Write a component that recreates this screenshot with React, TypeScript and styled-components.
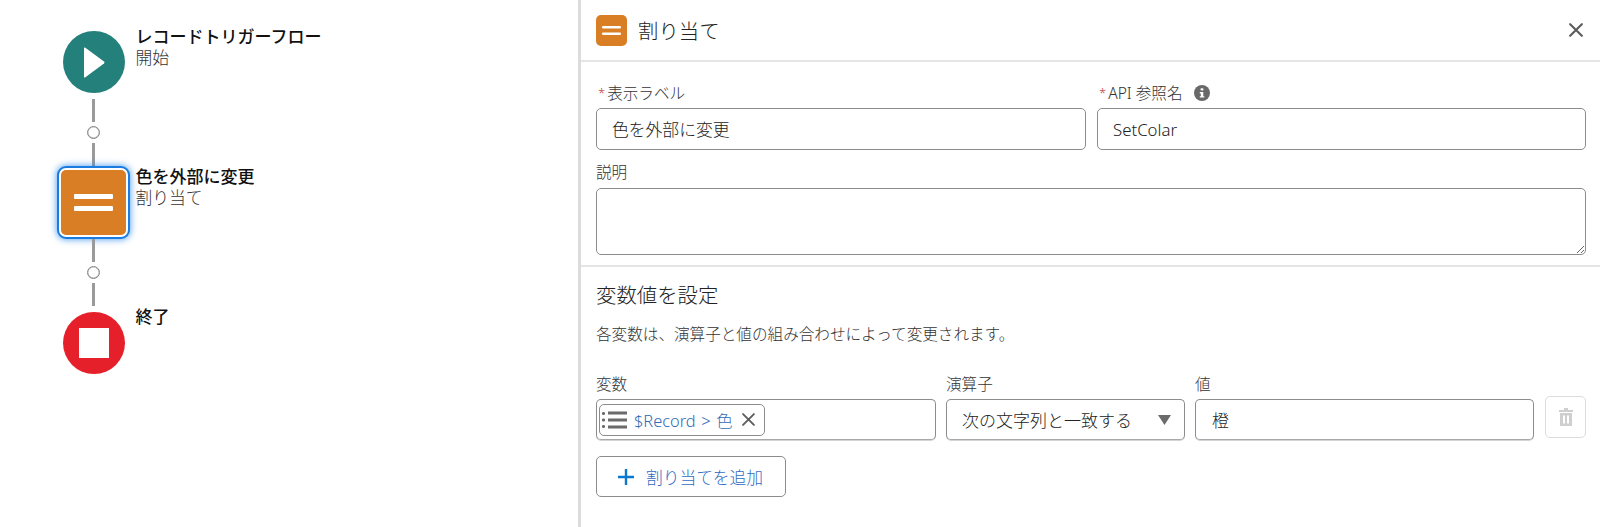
import React from "react";
import styled, { createGlobalStyle } from "styled-components";

const FONT = `"Noto Sans", "Noto Sans CJK JP", sans-serif`;

const Global = createGlobalStyle`
  html, body { margin: 0; padding: 0; background: #fff; }
  * { box-sizing: border-box; }
  body { font-family: ${FONT}; color: #2f2f2e; font-weight: 300; }
`;

const Page = styled.div`
  display: flex;
  width: 1600px;
  height: 527px;
  overflow: hidden;
  background: #fff;
`;

const Canvas = styled.div`
  width: 578px;
  flex: none;
  padding: 26px 0 0 57px;
  display: flex;
  flex-direction: column;
`;

const NodeRow = styled.div`
  display: flex;
  gap: 6px;
  height: 73px;
`;

const IconSlot = styled.div`
  width: 73px;
  flex: none;
  display: flex;
  justify-content: center;
`;

const Circle = styled.div<{ $color: string; $top: number }>`
  width: 62px;
  height: 62px;
  margin-top: ${(p) => p.$top}px;
  border-radius: 50%;
  background: ${(p) => p.$color};
  display: flex;
  align-items: center;
  justify-content: center;
`;

const SelectedTile = styled.div`
  width: 73px;
  height: 73px;
  border: 2px solid #1a7be0;
  border-radius: 9px;
  padding: 2px;
  background: #fff;
  box-shadow: 0 0 6px 1px rgba(27, 130, 235, 0.65);
`;

const TileFill = styled.div`
  width: 100%;
  height: 100%;
  border-radius: 5px;
  background: #d97e24;
  display: flex;
  align-items: center;
  justify-content: center;
`;

const NodeText = styled.div`
  margin-left: -0.5px;
  font-size: 16.8px;
  line-height: 21px;
`;

const NodeTitle = styled.div`
  font-size: 17px;
  font-weight: 500;
  color: #111;
`;

const NodeType = styled.div`
  color: #333;
`;

const Connector = styled.div`
  width: 73px;
  display: flex;
  flex-direction: column;
  align-items: center;
`;

const Line = styled.div`
  width: 3px;
  height: 23px;
  background: #9a9a9a;
`;

const Dot = styled.div`
  width: 13px;
  height: 13px;
  margin: 4px 0 4px;
  border: 1px solid #858585;
  border-radius: 50%;
  background: #fff;
  box-shadow: inset 0 0 0 0.5px #b5b5b5;
`;

const Panel = styled.div`
  flex: 1;
  min-width: 0;
  border-left: 3px solid #dcdcdc;
  display: flex;
  flex-direction: column;
`;

const PanelHeader = styled.div`
  height: 62px;
  flex: none;
  border-bottom: 2px solid #e5e5e5;
  padding: 0 14px 0 15px;
  display: flex;
  align-items: center;
  gap: 11px;
`;

const HeaderIcon = styled.div`
  width: 31px;
  height: 31px;
  border-radius: 5px;
  background: #d97e24;
  display: flex;
  align-items: center;
  justify-content: center;
`;

const PanelTitle = styled.div`
  flex: 1;
  font-size: 20.4px;
  color: #222;
`;

const CloseButton = styled.div`
  width: 20px;
  height: 20px;
  display: flex;
  align-items: center;
  justify-content: center;
`;

const TopSection = styled.div`
  flex: none;
  padding: 21px 14px 10px 15px;
  border-bottom: 2px solid #e5e5e5;
`;

const TwoCols = styled.div`
  display: grid;
  grid-template-columns: 490px 489px;
  gap: 11px;
`;

const FieldLabel = styled.div`
  display: flex;
  align-items: center;
  height: 20px;
  margin-bottom: 5px;
  font-size: 15.6px;
  line-height: 20px;
  color: #333;
`;

const Required = styled.span`
  color: #c23934;
  margin: 0 2px 0 2px;
  font-size: 13px;
`;

const InfoDot = styled.span`
  width: 16px;
  height: 16px;
  margin-left: 11px;
  display: inline-flex;
`;

const TextInput = styled.input`
  display: block;
  width: 100%;
  height: 42px;
  border: 1px solid #8c8c8c;
  border-radius: 5px;
  padding: 0 15px;
  font-family: ${FONT};
  font-weight: 300;
  font-size: 16.8px;
  color: #222;
  background: #fff;
  outline: none;
`;

const DescLabel = styled(FieldLabel)`
  margin: 12px 0 6px;
`;

const TextArea = styled.textarea`
  display: block;
  width: 100%;
  height: 67px;
  border: 1px solid #8c8c8c;
  border-radius: 5px;
  font-family: ${FONT};
  resize: vertical;
  background: #fff;
  outline: none;
`;

const BottomSection = styled.div`
  padding: 14px 14px 0 15px;
`;

const SectionHeading = styled.div`
  font-size: 20.4px;
  line-height: 28px;
  color: #222;
`;

const SectionHint = styled.div`
  margin: 15px 0 30px;
  font-size: 15.6px;
  line-height: 20px;
  color: #333;
`;

const AssignRow = styled.div`
  display: flex;
  gap: 10px;
  align-items: flex-start;
`;

const AssignCol = styled.div<{ $w: number }>`
  width: ${(p) => p.$w}px;
  flex: none;
`;

const BoxBase = styled.div`
  height: 41px;
  border: 1px solid #8c8c8c;
  border-bottom-color: #a8a8a8;
  border-radius: 5px;
  background: #fff;
  box-shadow: 0 1px 0 #d4d4d4;
  display: flex;
  align-items: center;
  font-size: 16.8px;
  color: #222;
`;

const VarBox = styled(BoxBase)`
  padding-left: 2px;
`;

const Pill = styled.div`
  height: 32px;
  width: 166px;
  border: 1px solid #8c8c8c;
  border-radius: 5px;
  display: flex;
  align-items: center;
  padding: 0 9px 0 2px;
  gap: 7px;
`;

const PillText = styled.span`
  flex: 1;
  font-size: 16.4px;
  word-spacing: 1.4px;
  color: #2f6cb5;
  white-space: nowrap;
`;

const SelectBox = styled(BoxBase)`
  justify-content: space-between;
  padding: 0 13px 0 15px;
`;

const SelectText = styled.span`
  font-size: 17px;
`;

const ValueBox = styled(BoxBase)`
  padding-left: 16px;
`;

const TrashButton = styled.div`
  width: 41px;
  height: 42px;
  flex: none;
  margin: 22px 0 0 1px;
  border: 1px solid #dcdcdc;
  border-radius: 5px;
  display: flex;
  align-items: center;
  justify-content: center;
`;

const AddButton = styled.div`
  width: 190px;
  height: 41px;
  margin-top: 16px;
  border: 1px solid #8c8c8c;
  border-radius: 5px;
  display: flex;
  align-items: center;
  padding-left: 21px;
  gap: 12px;
  font-size: 16.8px;
  color: #2f6cc4;
`;

const Bars = ({ w, h, t, gap }: { w: number; h: number; t: number; gap: number }) => (
  <svg width={w} height={h} viewBox={`0 0 ${w} ${h}`}>
    <rect x="0" y="0" width={w} height={t} rx="1" fill="#fff" />
    <rect x="0" y={t + gap} width={w} height={t} rx="1" fill="#fff" />
  </svg>
);

const Cross = ({ size, color, sw }: { size: number; color: string; sw: number }) => (
  <svg width={size} height={size} viewBox="0 0 12 12">
    <path d="M1 1 L11 11 M11 1 L1 11" stroke={color} strokeWidth={sw} strokeLinecap="round" fill="none" />
  </svg>
);

export default function App() {
  return (
    <Page>
      <Global />
      <Canvas>
        <NodeRow>
          <IconSlot>
            <Circle $color="#23807a" $top={5}>
              <svg width="22" height="31" viewBox="0 0 22 31">
                <path d="M2 .5 L21 14.5 Q22 15.5 21 16.5 L2 30.5 Q1 31 1 29.5 L1 1.5 Q1 0 2 .5 Z" fill="#fff" />
              </svg>
            </Circle>
          </IconSlot>
          <NodeText>
            <NodeTitle>レコードトリガーフロー</NodeTitle>
            <NodeType>開始</NodeType>
          </NodeText>
        </NodeRow>
        <Connector>
          <Line />
          <Dot />
          <Line />
        </Connector>
        <NodeRow>
          <IconSlot>
            <SelectedTile>
              <TileFill>
                <Bars w={39} h={17} t={5} gap={7} />
              </TileFill>
            </SelectedTile>
          </IconSlot>
          <NodeText>
            <NodeTitle>色を外部に変更</NodeTitle>
            <NodeType>割り当て</NodeType>
          </NodeText>
        </NodeRow>
        <Connector>
          <Line />
          <Dot />
          <Line />
        </Connector>
        <NodeRow>
          <IconSlot>
            <Circle $color="#e5202a" $top={6}>
              <svg width="30" height="30" viewBox="0 0 30 30">
                <rect width="30" height="30" fill="#fff" />
              </svg>
            </Circle>
          </IconSlot>
          <NodeText>
            <NodeTitle>終了</NodeTitle>
          </NodeText>
        </NodeRow>
      </Canvas>
      <Panel>
        <PanelHeader>
          <HeaderIcon>
            <Bars w={19} h={9} t={2.5} gap={4} />
          </HeaderIcon>
          <PanelTitle>割り当て</PanelTitle>
          <CloseButton>
            <Cross size={14} color="#5c5c5c" sw={1.8} />
          </CloseButton>
        </PanelHeader>
        <TopSection>
          <TwoCols>
            <div>
              <FieldLabel>
                <Required>*</Required>表示ラベル
              </FieldLabel>
              <TextInput readOnly value="色を外部に変更" />
            </div>
            <div>
              <FieldLabel>
                <Required>*</Required>API 参照名
                <InfoDot>
                  <svg width="16" height="16" viewBox="0 0 16 16">
                    <circle cx="8" cy="8" r="8" fill="#696969" />
                    <rect x="6.5" y="3.2" width="3" height="2.4" rx="1" fill="#fff" />
                    <path d="M5.8 7 H9.3 V11.2 H10.3 V12.6 H5.8 V11.2 H6.8 V8.4 H5.8 Z" fill="#fff" />
                  </svg>
                </InfoDot>
              </FieldLabel>
              <TextInput readOnly value="SetColar" />
            </div>
          </TwoCols>
          <DescLabel>説明</DescLabel>
          <TextArea readOnly />
        </TopSection>
        <BottomSection>
          <SectionHeading>変数値を設定</SectionHeading>
          <SectionHint>各変数は、演算子と値の組み合わせによって変更されます。</SectionHint>
          <AssignRow>
            <AssignCol $w={340}>
              <FieldLabel>変数</FieldLabel>
              <VarBox>
                <Pill>
                  <svg width="25" height="20" viewBox="0 0 25 20">
                    <g fill="#6b6b6b">
                      <rect x="0" y="2" width="3" height="3" rx="1.2" />
                      <rect x="0" y="8.5" width="3" height="3" rx="1.2" />
                      <rect x="0" y="15" width="3" height="3" rx="1.2" />
                      <rect x="6" y="1.5" width="19" height="3" />
                      <rect x="6" y="8.5" width="19" height="3" />
                      <rect x="6" y="15.5" width="19" height="3" />
                    </g>
                  </svg>
                  <PillText>$Record &gt; 色</PillText>
                  <Cross size={13} color="#5c5c5c" sw={1.7} />
                </Pill>
              </VarBox>
            </AssignCol>
            <AssignCol $w={239}>
              <FieldLabel>演算子</FieldLabel>
              <SelectBox>
                <SelectText>次の文字列と一致する</SelectText>
                <svg width="13" height="10" viewBox="0 0 13 10">
                  <path d="M0 0 H13 L6.5 10 Z" fill="#6b6b6b" />
                </svg>
              </SelectBox>
            </AssignCol>
            <AssignCol $w={339}>
              <FieldLabel>値</FieldLabel>
              <ValueBox>橙</ValueBox>
            </AssignCol>
            <TrashButton>
              <svg width="14" height="18" viewBox="0 0 14 18">
                <g fill="#cfcfcf">
                  <rect x="5" y="0" width="4" height="2" />
                  <rect x="0" y="2" width="14" height="2" />
                  <path d="M1 5 H13 V18 H1 Z M4 7.5 V15.5 H6 V7.5 Z M8 7.5 V15.5 H10 V7.5 Z" fillRule="evenodd" />
                </g>
              </svg>
            </TrashButton>
          </AssignRow>
          <AddButton>
            <svg width="16" height="16" viewBox="0 0 16 16">
              <path d="M8 0 V16 M0 8 H16" stroke="#0b78d0" strokeWidth="2.4" />
            </svg>
            割り当てを追加
          </AddButton>
        </BottomSection>
      </Panel>
    </Page>
  );
}
